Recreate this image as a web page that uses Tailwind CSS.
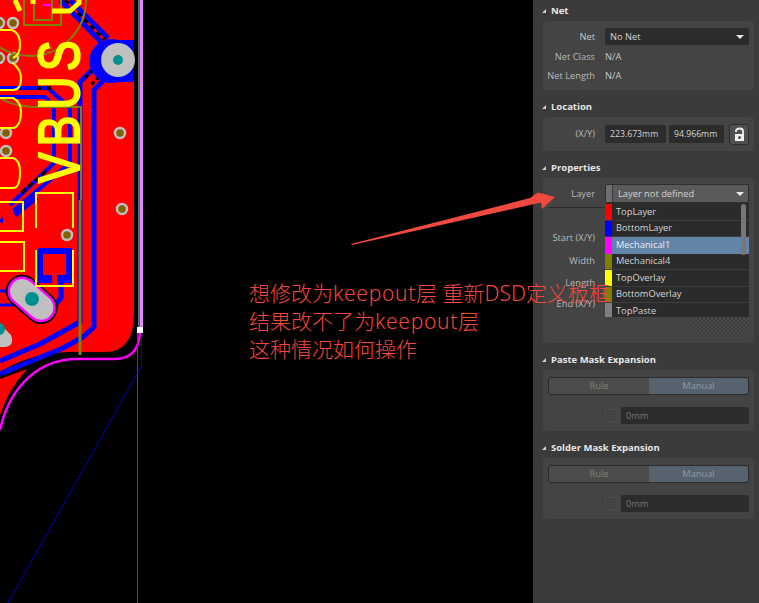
<!DOCTYPE html>
<html lang="zh-CN">
<head>
    <meta charset="UTF-8" />
    <title>PCB Properties</title>
    <script src="https://cdn.jsdelivr.net/npm/@tailwindcss/browser@4"></script>
</head>
<body class="bg-black overflow-hidden font-['Open_Sans','Noto_Sans_CJK_SC',sans-serif]">
<div class="relative flex w-[759px] h-[603px] overflow-hidden">

    <!-- pcb canvas -->
    <div class="w-[533px] h-full bg-black shrink-0">
        <svg width="533" height="603" viewBox="0 0 533 603">
            <!-- copper pour -->
            <path d="M0 0H134V313Q134 352 105 352H70Q30 353 0 372Z" fill="#ff0000"/>
            <path d="M27 369L0 379V415Q8 390 27 369Z" fill="#ff0000"/>
            <!-- traces -->
            <g fill="none" stroke-linejoin="round">
                <path d="M60 0L101 42M70 0L108 38" stroke="#0000ff" stroke-width="5"/>
                <path d="M65 0L105 40" stroke="#000" stroke-width="3" stroke-dasharray="5 4"/>
                <path d="M100 62L80 82V322L40 344L0 361" stroke="#0000ff" stroke-width="5"/>
                <path d="M108 76L94 90V327L83 337L63 348L0 374" stroke="#0000ff" stroke-width="5"/>
                <path d="M98 65L84 79M104 72L91 85" stroke="#000" stroke-width="3" stroke-dasharray="4 3"/>
                <path d="M0 88H48L70 108V163L20 205L0 222" stroke="#0000ff" stroke-width="4"/>
                <path d="M0 97H45L54 107V163L10 205" stroke="#0000ff" stroke-width="4"/>
                <path d="M37 88H41M47 88H51" stroke="#000" stroke-width="4"/>
                <path d="M46 171L20 194" stroke="#000" stroke-width="3" stroke-dasharray="6 3"/>
                <path d="M61 283V298L52 309" stroke="#0000ff" stroke-width="5"/>
                <path d="M37 197L15 215" stroke="#0000ff" stroke-width="5"/>
            </g>
            <!-- mounting via -->
            <path d="M134 40H118A22 22 0 1 0 118 82H134Z" fill="#0000ff"/>
            <circle cx="118" cy="60" r="17" fill="#c0c0c0"/>
            <circle cx="118" cy="60" r="5" fill="#009090"/>
            <!-- small vias -->
            <g fill="#806000" stroke="#c0c0c0" stroke-width="2.5">
                <circle cx="13" cy="23" r="5"/><circle cx="-1" cy="23" r="5"/>
                <circle cx="13" cy="58" r="5"/><circle cx="-1" cy="58" r="5"/>
                <circle cx="6" cy="133" r="5"/><circle cx="6" cy="151" r="5"/>
                <circle cx="120" cy="133" r="5"/><circle cx="122" cy="209" r="5"/><circle cx="67" cy="235" r="5"/>
            </g>
            <!-- pads -->
            <rect x="38" y="248" width="34" height="35" fill="#0000ff"/>
            <rect x="43" y="254" width="23" height="21" fill="#ff0000"/>
            <rect x="52" y="275" width="5" height="8" fill="#ff0000"/>
            <rect x="3" y="210" width="10" height="13" fill="#ff0000"/>
            <path d="M0 291H12M0 305H14" stroke="#0000ff" stroke-width="3"/>
            <path d="M0 298H14" stroke="#ff0000" stroke-width="3"/>
            <g transform="rotate(41 32 299)">
                <rect x="3" y="283" width="58" height="33" rx="16.5" fill="#000"/>
                <rect x="6" y="286" width="52" height="27" rx="13.5" fill="#c0c0c0" stroke="#ff00ff" stroke-width="2.5"/>
            </g>
            <circle cx="32" cy="299" r="7" fill="#009090"/>
            <path d="M-6 318L11 335Q15 346 5 347H-6Z" fill="#c0c0c0"/>
            <circle cx="-1" cy="329" r="6" fill="#009090"/>
            <!-- mechanical -->
            <g fill="none" stroke="#808000">
                <circle cx="30" cy="0" r="56" stroke-width="2"/>
                <path d="M24 0V25H61V0M34 0V20H52V0" stroke-width="2"/>
                <path d="M0 98Q14 107 40 107H81V200" stroke-width="2"/>
                <path d="M80 200V355" stroke-width="3"/>
                <path d="M45 48H52" stroke-width="2"/>
            </g>
            <!-- overlay -->
            <g fill="none" stroke="#ffff00" stroke-width="2">
                <path d="M0 30H12Q20 33 20 45Q20 55 13 58M13 63Q21 70 21 78Q21 90 13 90H0M0 98H13Q21 102 21 112Q21 125 14 128H0M0 158H13Q20 160 20 172Q20 188 13 188H0"/>
                <path d="M36 228V193H73V228M36 250V286H73V250"/>
                <path d="M0 202H23V231H0M0 242H24V271H0"/>
            </g>
            <text transform="translate(79 183) rotate(-90) scale(.8 1)" x="0 46 92 140" font-family="Liberation Sans" font-size="57" fill="#ffff00" stroke="#ffff00" stroke-width="2.2">VBUS</text>
            <path d="M52 11H70L79 3V0M33 0V4M15 0L20 11" fill="none" stroke="#ffff00" stroke-width="5"/>
            <path d="M43 5H52" stroke="#ff00ff" stroke-width="2"/>
            <!-- board outline -->
            <path d="M140 333Q138 359 115 359H77C40 359 10 385 0 430" fill="none" stroke="#ff00ff" stroke-width="2.5"/>
            <rect x="137" y="333" width="1" height="270" fill="#b82020"/>
            <path d="M141.500 335V366L8 603" fill="none" stroke="#0000c8" stroke-width="1"/>
            <rect x="139.500" y="0" width="3.500" height="330" fill="#e48cff"/>
            <rect x="138" y="0" width="1" height="330" fill="#5a7a7a"/>
            <rect x="137" y="327" width="6" height="6" fill="#fff"/>
        </svg>
    </div>

    <!-- properties panel -->
    <div class="w-[226px] h-full bg-[#3b3b3b] shrink-0 text-[9.3px] leading-[12px] text-[#c8c8c8] pt-[5px] pl-[10px] pr-[5px]">

        <h3 class="h-[12px] mb-[4px] flex items-center gap-[5px] text-[9.5px] font-bold text-[#e6e6e6]"><span class="w-0 h-0 border-l-[4px] border-t-[4px] border-l-transparent border-t-[#d0d0d0] -ml-[1px] scale-y-[-1]"></span>Net</h3>
        <div class="h-[69px] bg-[#444444] rounded-[3px] pt-[7px] pr-[5px]">
            <div class="flex items-center h-[17px]">
                <span class="w-[52px] text-right">Net</span>
                <div class="ml-[10px] flex-1 h-[17px] bg-[#2c2c2c] rounded-[2px] pl-[5px] flex items-center justify-between pr-[5px] text-[#d4d4d4]">No Net<span class="w-0 h-0 border-x-[4px] border-t-[4px] border-x-transparent border-t-[#e8e8e8]"></span></div>
            </div>
            <div class="flex items-center mt-[6px] h-[12px]"><span class="w-[52px] text-right text-[#b8b8b8]">Net Class</span><span class="ml-[10px]">N/A</span></div>
            <div class="flex items-center mt-[7px] h-[12px]"><span class="w-[52px] text-right text-[#b8b8b8]">Net Length</span><span class="ml-[10px]">N/A</span></div>
        </div>

        <h3 class="h-[12px] mt-[11px] mb-[4px] flex items-center gap-[5px] text-[9.5px] font-bold text-[#e6e6e6]"><span class="w-0 h-0 border-l-[4px] border-t-[4px] border-l-transparent border-t-[#d0d0d0] -ml-[1px] scale-y-[-1]"></span>Location</h3>
        <div class="h-[34px] bg-[#444444] rounded-[3px] flex items-center pr-[5px]">
            <span class="w-[52px] text-right text-[#b8b8b8]">(X/Y)</span>
            <div class="ml-[10px] w-[61px] h-[18px] bg-[#2c2c2c] rounded-[2px] pl-[5px] flex items-center text-[8.7px] text-[#d4d4d4]">223.673mm</div>
            <div class="ml-[3px] w-[55px] h-[18px] bg-[#2c2c2c] rounded-[2px] pl-[5px] flex items-center text-[8.7px] text-[#d4d4d4]">94.966mm</div>
            <div class="ml-[5px] w-[20px] h-[21px] bg-[#505050] border border-[#2e2e2e] rounded-[3px] flex items-center justify-center">
                <svg width="11" height="15" viewBox="0 0 11 15"><path d="M2 5V4Q2 1.500 5.500 1.500Q9 1.500 9 4V7" fill="none" stroke="#f0f0f0" stroke-width="1.800"/><path d="M1 7H10V14H1Z" fill="#f0f0f0"/><circle cx="5.500" cy="10.500" r="1.500" fill="#505050"/></svg>
            </div>
        </div>

        <h3 class="h-[12px] mt-[11px] mb-[4px] flex items-center gap-[5px] text-[9.5px] font-bold text-[#e6e6e6]"><span class="w-0 h-0 border-l-[4px] border-t-[4px] border-l-transparent border-t-[#d0d0d0] -ml-[1px] scale-y-[-1]"></span>Properties</h3>
        <div class="relative h-[165px] bg-[#444444] rounded-[3px] pt-[6px] pr-[5px]">
            <div class="flex items-center h-[19px]">
                <span class="w-[52px] text-right text-[#b8b8b8]">Layer</span>
                <div class="ml-[10px] flex-1 h-[19px] rounded-[2px] border border-[#2e2e2e] bg-[#5a5a5a] flex items-center text-[#d4d4d4]">
                    <span class="w-[7px] h-full bg-[#6e6e6e] border-r border-[#3a3a3a]"></span>
                    <span class="pl-[5px] flex-1">Layer not defined</span>
                    <span class="mr-[4px] w-0 h-0 border-x-[4px] border-t-[4px] border-x-transparent border-t-[#e8e8e8]"></span>
                </div>
            </div>
            <div class="ml-[5px] mt-[4px] w-[57px] h-px bg-[#2c2c2c]"></div>
            <div class="flex items-center mt-[24px] h-[12px]"><span class="w-[52px] text-right text-[#b8b8b8]">Start (X/Y)</span></div>
            <div class="flex items-center mt-[11px] h-[12px]"><span class="w-[52px] text-right text-[#b8b8b8]">Width</span></div>
            <div class="flex items-center mt-[10px] h-[12px]"><span class="w-[52px] text-right text-[#b8b8b8]">Length</span></div>
            <div class="flex items-center mt-[9px] h-[12px]"><span class="w-[52px] text-right text-[#b8b8b8]">End (X/Y)</span></div>
            <!-- open layer list -->
            <div class="absolute left-[62px] top-[25px] w-[144px] h-[114px] pt-[1px] bg-[#2b2b2b] overflow-hidden text-[#d4d4d4]">
                <div class="flex items-center h-[16.5px] border-b border-[#3c3c3c]"><span class="w-[7px] h-full bg-[#ff0000]"></span><span class="pl-[4px]">TopLayer</span></div>
                <div class="flex items-center h-[16.5px] border-b border-[#3c3c3c]"><span class="w-[7px] h-full bg-[#0000ff]"></span><span class="pl-[4px]">BottomLayer</span></div>
                <div class="flex items-center h-[16.5px] bg-[#6184a8] text-[#e8eef4]"><span class="w-[7px] h-full bg-[#ff00ff]"></span><span class="pl-[4px]">Mechanical1</span></div>
                <div class="flex items-center h-[16.5px] border-b border-[#3c3c3c]"><span class="w-[7px] h-full bg-[#808000]"></span><span class="pl-[4px]">Mechanical4</span></div>
                <div class="flex items-center h-[16.5px] border-b border-[#3c3c3c]"><span class="w-[7px] h-full bg-[#ffff00]"></span><span class="pl-[4px]">TopOverlay</span></div>
                <div class="flex items-center h-[16.5px] border-b border-[#3c3c3c]"><span class="w-[7px] h-full bg-[#808000]"></span><span class="pl-[4px]">BottomOverlay</span></div>
                <div class="flex items-center h-[16.5px]"><span class="w-[7px] h-full bg-[#808080]"></span><span class="pl-[4px]">TopPaste</span></div>
                <span class="absolute right-[3px] top-[1px] w-[5px] h-[51px] rounded-full bg-[#777777]"></span>
            </div>
            <div class="absolute left-[150px] top-[140px] w-[56px] h-[15px] bg-[repeating-conic-gradient(#4c4c4c_0_25%,#3e3e3e_0_50%)] bg-[length:4px_4px]"></div>
        </div>

        <h3 class="h-[12px] mt-[11px] mb-[4px] flex items-center gap-[5px] text-[9.5px] font-bold text-[#e6e6e6]"><span class="w-0 h-0 border-l-[4px] border-t-[4px] border-l-transparent border-t-[#d0d0d0] -ml-[1px] scale-y-[-1]"></span>Paste Mask Expansion</h3>
        <div class="h-[61px] bg-[#444444] rounded-[3px] pt-[7px] px-[5px]">
            <div class="flex h-[18px] rounded-[3px] border border-[#2a2a2a] overflow-hidden text-[#808080] text-center leading-[16px]">
                <span class="w-[100px] bg-[#4c4c4c]">Rule</span><span class="flex-1 bg-[#56636f] text-[#8e979f]">Manual</span>
            </div>
            <div class="flex items-center mt-[12px] h-[17px]">
                <span class="ml-[57px] w-[13px] h-[13px] rounded-[2px] border border-[#4c4c4c] bg-[#424242]"></span>
                <div class="ml-[3px] flex-1 h-[17px] bg-[#2c2c2c] rounded-[2px] pl-[5px] flex items-center text-[#777777]">0mm</div>
            </div>
        </div>

        <h3 class="h-[12px] mt-[11px] mb-[4px] flex items-center gap-[5px] text-[9.5px] font-bold text-[#e6e6e6]"><span class="w-0 h-0 border-l-[4px] border-t-[4px] border-l-transparent border-t-[#d0d0d0] -ml-[1px] scale-y-[-1]"></span>Solder Mask Expansion</h3>
        <div class="h-[61px] bg-[#444444] rounded-[3px] pt-[7px] px-[5px]">
            <div class="flex h-[18px] rounded-[3px] border border-[#2a2a2a] overflow-hidden text-[#808080] text-center leading-[16px]">
                <span class="w-[100px] bg-[#4c4c4c]">Rule</span><span class="flex-1 bg-[#56636f] text-[#8e979f]">Manual</span>
            </div>
            <div class="flex items-center mt-[12px] h-[17px]">
                <span class="ml-[57px] w-[13px] h-[13px] rounded-[2px] border border-[#4c4c4c] bg-[#424242]"></span>
                <div class="ml-[3px] flex-1 h-[17px] bg-[#2c2c2c] rounded-[2px] pl-[5px] flex items-center text-[#777777]">0mm</div>
            </div>
        </div>
    </div>

    <!-- annotation drawn over the screenshot -->
    <svg class="absolute left-0 top-0 pointer-events-none" width="759" height="603" viewBox="0 0 759 603">
        <path d="M351 244L530 198L538 192.500L555 197L542 209L541 202.500L352 245Z" fill="#f04a3e"/>
    </svg>
    <div class="absolute left-[249px] top-[279px] whitespace-nowrap text-[21px] leading-[28px] text-[#f4463a] font-['Noto_Sans','Noto_Sans_CJK_SC',sans-serif] font-light">
        <div>想修改为<span class="tracking-[0.7px]">keepout</span>层 重新DSD定义板框</div>
        <div>结果改不了为<span class="tracking-[0.7px]">keepout</span>层</div>
        <div>这种情况如何操作</div>
    </div>
</div>
</body>
</html>
